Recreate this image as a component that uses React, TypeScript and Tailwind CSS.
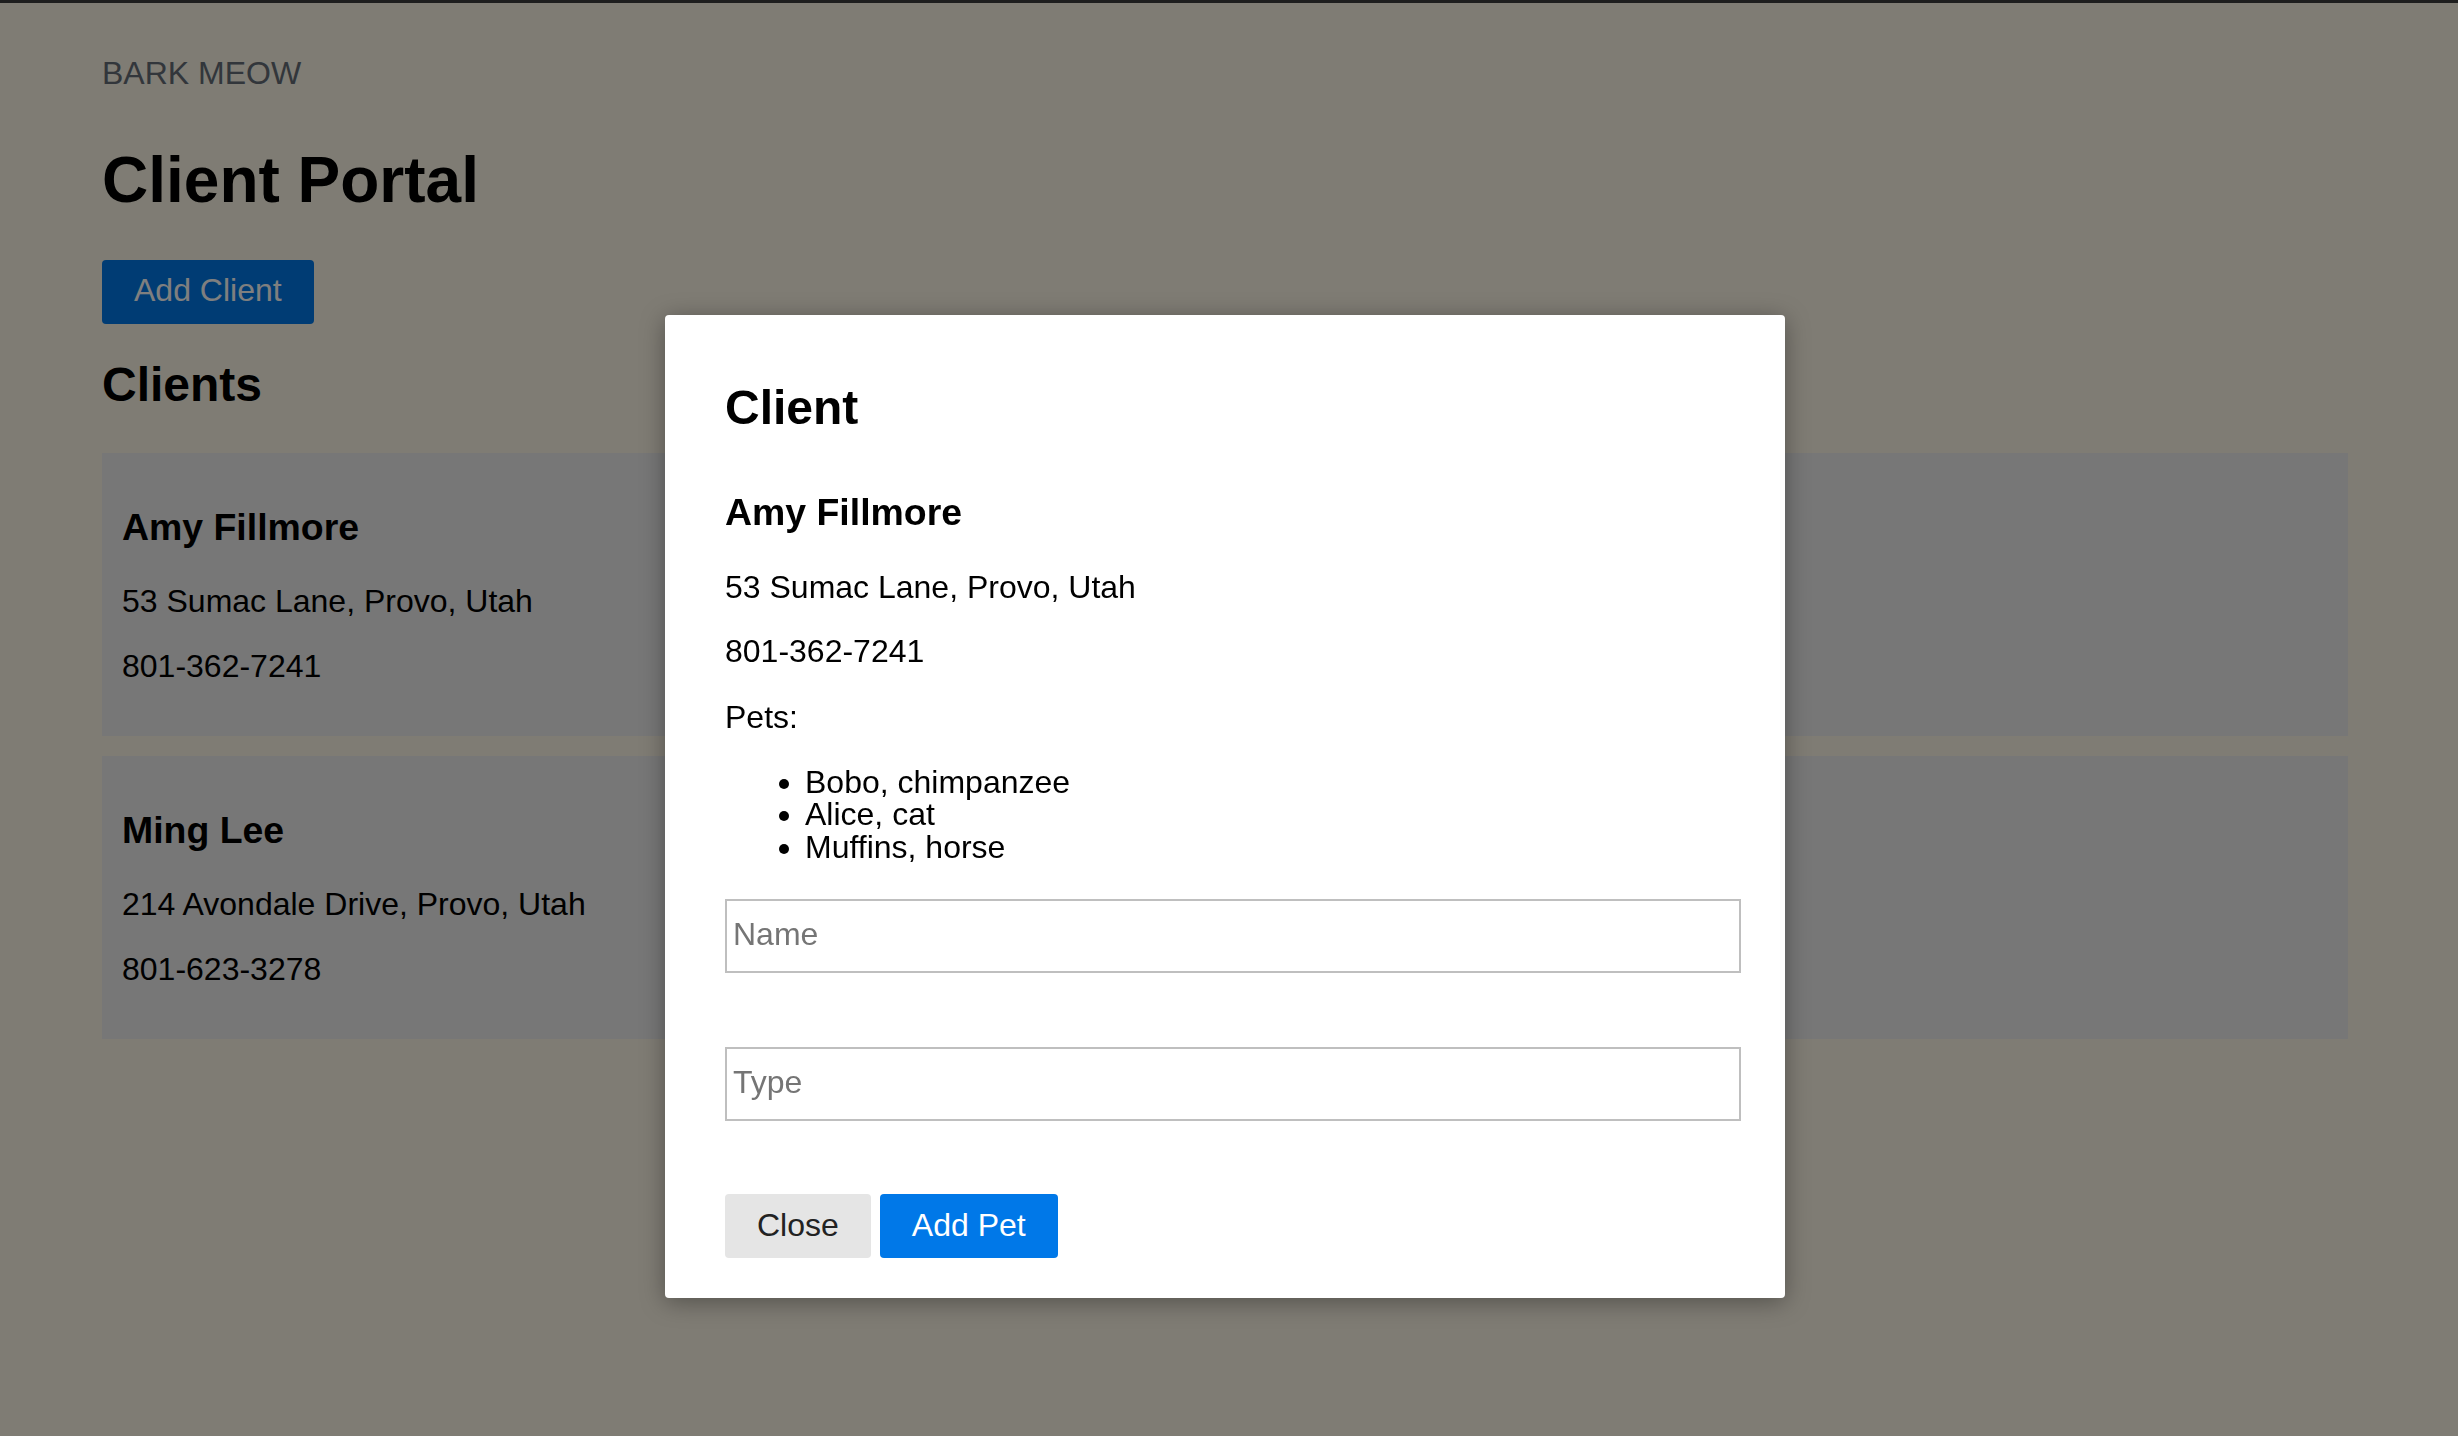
const clients = [
  { name: "Amy Fillmore", address: "53 Sumac Lane, Provo, Utah", phone: "801-362-7241" },
  { name: "Ming Lee", address: "214 Avondale Drive, Provo, Utah", phone: "801-623-3278" },
];

const pets = ["Bobo, chimpanzee", "Alice, cat", "Muffins, horse"];

function ClientCard({ name, address, phone }: { name: string; address: string; phone: string }) {
  return (
    <div className="w-full bg-[#eeeeee] px-[20px] pt-[20px] pb-[20px]">
      <h3 className="mt-[35px] text-[37.44px] leading-[38.5px] font-bold">{name}</h3>
      <p className="mt-[38.5px] text-[32px] leading-[33px]">{address}</p>
      <p className="mt-[32px] mb-[33px] text-[32px] leading-[33px]">{phone}</p>
    </div>
  );
}

function ClientModal() {
  const client = clients[0];
  return (
    <div className="absolute left-[665px] top-[315px] w-[1120px] rounded-[4px] bg-white px-[60px] pb-[40px] shadow-[0_4px_24px_rgba(0,0,0,0.35)]">
      <h2 className="mt-[67.6px] text-[48px] leading-[49.5px] font-bold">Client</h2>
      <h3 className="mt-[60.7px] text-[37.44px] leading-[38.5px] font-bold">{client.name}</h3>
      <p className="mt-[39.5px] text-[32px] leading-[33px]">{client.address}</p>
      <p className="mt-[31px] text-[32px] leading-[33px]">{client.phone}</p>
      <p className="mt-[33px] text-[32px] leading-[33px]">Pets:</p>
      <ul className="mt-[32px] list-disc pl-[80px] text-[32px] leading-[32.5px]">
        {pets.map((p) => (
          <li key={p}>{p}</li>
        ))}
      </ul>
      <input
        placeholder="Name"
        className="mt-[35.3px] block h-[74px] w-[calc(100%+16px)] border-2 border-[#bfbfbf] bg-white px-[6px] pb-[3px] text-[32px] outline-none placeholder:text-[#757575]"
      />
      <input
        placeholder="Type"
        className="mt-[74px] block h-[74px] w-[calc(100%+16px)] border-2 border-[#bfbfbf] bg-white px-[6px] pb-[3px] text-[32px] outline-none placeholder:text-[#757575]"
      />
      <div className="mt-[73px] flex gap-[9px]">
        <button className="h-[64px] rounded-[4px] bg-[#e5e5e5] px-[32px] pb-[2px] text-[32px] text-[#222]">Close</button>
        <button className="h-[64px] rounded-[4px] bg-[#0078e8] px-[32px] pb-[2px] text-[32px] text-white">Add Pet</button>
      </div>
    </div>
  );
}

export default function App() {
  return (
    <div className="relative min-h-screen overflow-hidden bg-[#fef8e8] font-['Liberation_Sans',Arial,sans-serif] text-black">
      <div className="h-[3px] bg-[#3c3c3c]" />
      <main className="flex flex-col items-start pl-[102px] pr-[110px]">
        <div className="mt-[54.4px] text-[32px] leading-[33px] text-[#656d77]">BARK MEOW</div>
        <h1 className="mt-[56.4px] text-[64px] leading-[66px] font-bold">Client Portal</h1>
        <button className="mt-[47px] h-[64px] rounded-[4px] bg-[#0078e8] px-[32px] pb-[3px] text-[32px] text-white">
          Add Client
        </button>
        <h2 className="mt-[36.6px] text-[48px] leading-[49.5px] font-bold">Clients</h2>
        <div className="mt-[43px] flex w-full flex-col gap-[20px]">
          {clients.map((c) => (
            <ClientCard key={c.name} {...c} />
          ))}
        </div>
      </main>

      <div className="fixed inset-0 bg-black/50" />
      <ClientModal />
    </div>
  );
}
